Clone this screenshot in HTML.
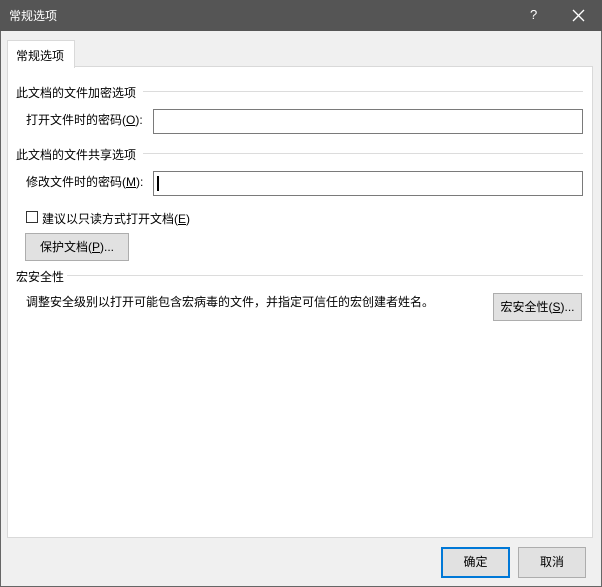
<!DOCTYPE html>
<html><head><meta charset="utf-8"><style>
*{margin:0;padding:0;box-sizing:border-box}
body{width:602px;height:587px;background:#f0f0f0;font-family:"Liberation Sans","Noto Sans CJK SC",sans-serif;font-size:12px;color:#000;position:relative;overflow:hidden}
.a{position:absolute;white-space:nowrap}
.title{left:0;top:0;width:602px;height:31px;background:#555555;color:#fff}
.panel{left:7px;top:66px;width:586px;height:472px;background:#fff;border:1px solid #d9d9d9}
.tab{left:7px;top:40px;width:68px;height:28px;background:#fff;border:1px solid #d9d9d9;border-bottom:none}
.line{height:1px;background:#dcdcdc}
.tb{background:#fff;border:1px solid #7a7a7a}
.btn{background:#e1e1e1;border:1px solid #adadad;text-align:center}
u{text-decoration:underline}
</style></head><body>
<div class="a" style="left:0;top:0;width:602px;height:587px;border:1px solid #666"></div>
<div class="a title"><span class="a" style="left:9px;top:7px;font-size:12px">常规选项</span>
<span class="a" style="left:530px;top:7px;font-size:13px">?</span>
<svg class="a" style="left:572px;top:9px" width="13" height="13"><path d="M1 1L12 12M12 1L1 12" stroke="#fff" stroke-width="1.3"/></svg></div>
<div class="a panel"></div>
<div class="a tab"></div>
<span class="a" style="left:16px;top:47px">常规选项</span>
<span class="a" style="left:16px;top:84px">此文档的文件加密选项</span>
<div class="a line" style="left:143px;top:91px;width:440px"></div>
<span class="a" style="left:26px;top:111px">打开文件时的密码(<u>O</u>):</span>
<div class="a tb" style="left:153px;top:109px;width:430px;height:25px"></div>
<span class="a" style="left:16px;top:146px">此文档的文件共享选项</span>
<div class="a line" style="left:143px;top:153px;width:440px"></div>
<span class="a" style="left:26px;top:173px">修改文件时的密码(<u>M</u>):</span>
<div class="a tb" style="left:153px;top:171px;width:430px;height:25px"></div>
<div class="a" style="left:157px;top:176px;width:2px;height:15px;background:#000"></div>
<div class="a" style="left:26px;top:211px;width:12px;height:12px;border:1px solid #333;background:#fff"></div>
<span class="a" style="left:42px;top:210px">建议以只读方式打开文档(<u>E</u>)</span>
<div class="a btn" style="left:25px;top:233px;width:104px;height:28px;line-height:26px">保护文档(<u>P</u>)...</div>
<span class="a" style="left:16px;top:268px">宏安全性</span>
<div class="a line" style="left:67px;top:275px;width:516px"></div>
<span class="a" style="left:26px;top:293px">调整安全级别以打开可能包含宏病毒的文件，并指定可信任的宏创建者姓名。</span>
<div class="a btn" style="left:493px;top:293px;width:89px;height:28px;line-height:26px">宏安全性(<u>S</u>)...</div>
<div class="a btn" style="left:441px;top:547px;width:69px;height:31px;line-height:27px;border:2px solid #0078d7">确定</div>
<div class="a btn" style="left:518px;top:547px;width:68px;height:31px;line-height:29px">取消</div>
</body></html>
